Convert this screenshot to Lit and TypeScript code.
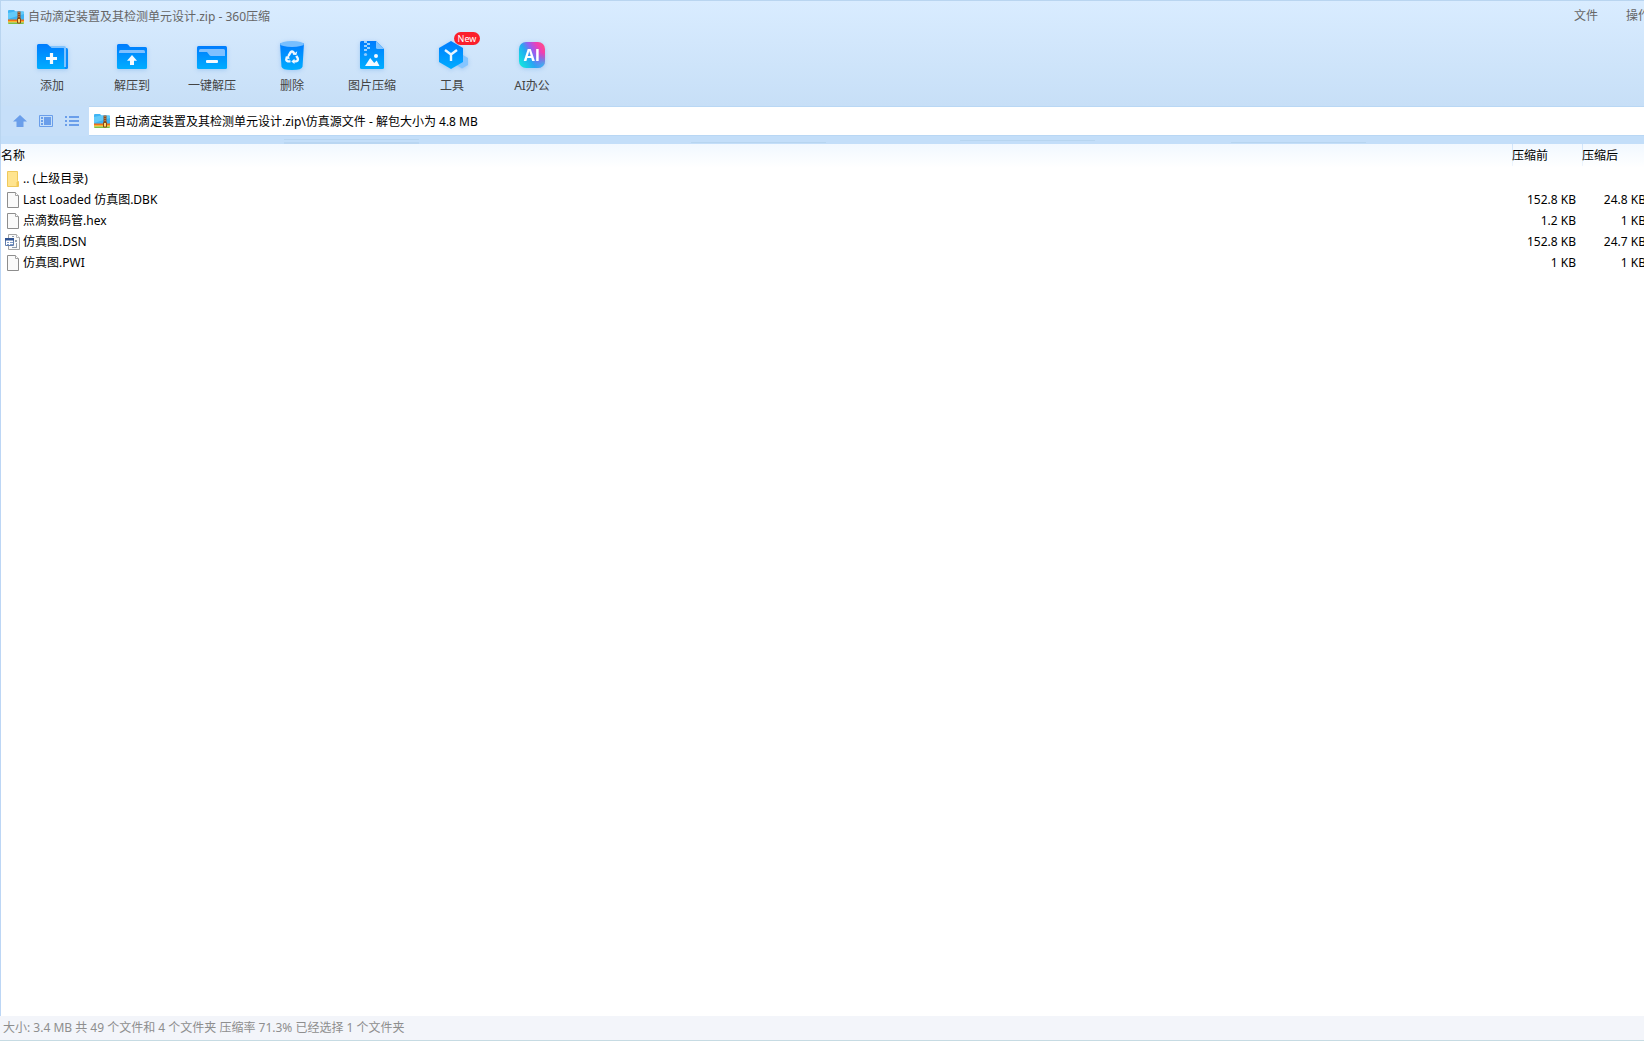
import { LitElement, html, svg, css, TemplateResult } from "lit";
import { customElement } from "lit/decorators.js";

interface Tool {
  label: string;
  icon: TemplateResult;
  isNew?: boolean;
}

interface Entry {
  name: string;
  kind: "folder" | "file" | "dsn";
  before: string;
  after: string;
}

const blue = (id: string) => svg`
  <linearGradient id=${id} x1="0" y1="0" x2="0" y2="1">
    <stop offset="0" stop-color="#007cfe" />
    <stop offset="1" stop-color="#00adff" />
  </linearGradient>`;

const toolSvg = (body: TemplateResult) => html`
  <svg class="tool-icon" width="36" height="36" viewBox="0 0 36 36" aria-hidden="true">${body}</svg>`;

const addIcon = toolSvg(svg`
  <defs>${blue("gAdd")}</defs>
  <path d="M30 12h2.500q1.500 0 1.500 1.500V31.500q0 1.500-1.500 1.500H29z" fill="#0b8bfb" />
  <path d="M3 9.500Q3 8 4.500 8h8q1 0 1.700.8L16 10.500h13q2 0 2 2V33H4.500Q3 33 3 31.500z" fill="url(#gAdd)" />
  <path d="M16 10h14q2 0 2 2v19h-2V12.500q0-.5-.5-.5H17.500z" fill="#7fc3ff" />
  <path d="M15.900 17h3.200v3.900H23v3.200h-3.900V28h-3.200v-3.900H12v-3.200h3.900z" fill="#f5faff" />`);

const extractIcon = toolSvg(svg`
  <defs>${blue("gExt")}</defs>
  <path d="M3 9.500Q3 8 4.500 8h8q1 0 1.700.8L16 11h15.500q1.500 0 1.500 1.500v19q0 1.500-1.500 1.500h-27Q3 33 3 31.500z" fill="url(#gExt)" />
  <path d="M5 17v-1.500Q5 14 6.500 14h23q1.500 0 1.500 1.500V17z" fill="#7fc0ff" />
  <path d="M18 19l5 5.800h-3V29h-4v-4.200h-3z" fill="#f5faff" />`);

const oneKeyIcon = toolSvg(svg`
  <defs>${blue("gKey")}</defs>
  <rect x="3" y="10" width="30" height="23" rx="1.500" fill="url(#gKey)" />
  <path d="M5 16v-1.500Q5 13 6.500 13h23q1.500 0 1.500 1.500V20H17q-1 0-1.500-.7L13 16H5z" fill="#7fc0ff" />
  <rect x="12" y="24" width="12" height="3" rx="1" fill="#f5faff" />`);

const deleteIcon = toolSvg(svg`
  <defs>${blue("gDel")}</defs>
  <path d="M6 7.500h24l-1.500 23Q28 34 18 34T7.500 30.500z" fill="url(#gDel)" />
  <ellipse cx="18" cy="8" rx="12" ry="3" fill="#78bfff" />
  <g fill="none" stroke="#f0f8ff" stroke-width="2.400">
    <path d="M14.400 20l2.200-3.700q1.400-1.500 2.800 0l1 1.700" />
    <path d="M22.300 19.800l1.400 2.400q.8 2.700-1.800 3.200h-2.500" />
    <path d="M16.500 25.400h-2.600q-2.400-.8-1.300-3l.8-1.400" />
  </g>
  <path d="M18.600 18.700l3.800.4.800-3.800zM20.500 22.700v5.400l-3.200-2.700zM10.900 21l3.900-1.300.9 3.800z" fill="#f0f8ff" />`);

const pictureIcon = toolSvg(svg`
  <defs>${blue("gPic")}</defs>
  <path d="M6 6.500Q6 5 7.500 5H22l8 8v18.500q0 1.500-1.500 1.500h-21Q6 33 6 31.500z" fill="url(#gPic)" />
  <path d="M22 5l8 8h-6.500q-1.500 0-1.500-1.500z" fill="#82c4ff" />
  <path d="M10 5h3v2h-3zM13 7h3v2h-3zM10 9h3v2h-3zM13 11h3v2h-3zM10 13h3v2h-3z" fill="#9bd1ff" />
  <circle cx="11.500" cy="18.500" r="1.600" fill="#8ccaff" />
  <circle cx="22" cy="20" r="2" fill="#f5faff" />
  <path d="M11 30l5.200-8 4 5 2.500-2.500L25.500 30z" fill="#f5faff" />`);

const toolsIcon = toolSvg(svg`
  <defs>${blue("gTool")}</defs>
  <path d="M29 19l5 3v7l-6 3.500-5-3z" fill="#85c5ff" />
  <path d="M17 5l12 7v14l-12 7-12-7V12z" fill="url(#gTool)" />
  <path d="M11 14l6 4.500 6-4.500M17 18.500V25" fill="none" stroke="#e9f5ff" stroke-width="2.400" />`);

const aiIcon = toolSvg(svg`
  <defs>
    <linearGradient id="gAi" x1="0" y1=".8" x2="1" y2=".2">
      <stop offset="0" stop-color="#12e6de" />
      <stop offset=".38" stop-color="#25a8f2" />
      <stop offset=".6" stop-color="#9a5cf0" />
      <stop offset=".82" stop-color="#ef3fb4" />
      <stop offset="1" stop-color="#ff4b86" />
    </linearGradient>
    <radialGradient id="gAi2" cx="1" cy="1" r=".6">
      <stop offset="0" stop-color="#18d9f0" />
      <stop offset="1" stop-color="#3a8cf5" stop-opacity="0" />
    </radialGradient>
  </defs>
  <rect x="5" y="6" width="26" height="26" rx="7" fill="url(#gAi)" />
  <rect x="5" y="6" width="26" height="26" rx="7" fill="url(#gAi2)" />
  <text x="18" y="25" text-anchor="middle" font-family="Open Sans, sans-serif" font-weight="700" font-size="16" fill="#fff">AI</text>`);

const tools: Tool[] = [
  { label: "添加", icon: addIcon },
  { label: "解压到", icon: extractIcon },
  { label: "一键解压", icon: oneKeyIcon },
  { label: "删除", icon: deleteIcon },
  { label: "图片压缩", icon: pictureIcon },
  { label: "工具", icon: toolsIcon, isNew: true },
  { label: "AI办公", icon: aiIcon },
];

const entries: Entry[] = [
  { name: ".. (上级目录)", kind: "folder", before: "", after: "" },
  { name: "Last Loaded 仿真图.DBK", kind: "file", before: "152.8 KB", after: "24.8 KB" },
  { name: "点滴数码管.hex", kind: "file", before: "1.2 KB", after: "1 KB" },
  { name: "仿真图.DSN", kind: "dsn", before: "152.8 KB", after: "24.7 KB" },
  { name: "仿真图.PWI", kind: "file", before: "1 KB", after: "1 KB" },
];

const zipIcon = html`
  <svg class="zip" width="16" height="16" viewBox="0 0 16 16" aria-hidden="true">
    <path d="M0 2Q0 1 1 1h5l1.500 1.500H15q1 0 1 1V11H0z" fill="#3fb4f4" />
    <path d="M0 4l7-1.500h8q1 0 1 1V5L0 10z" fill="#62caf9" />
    <path d="M0 10.500h16V12H0z" fill="#ee6f1e" />
    <path d="M0 12h16v1.500H0z" fill="#fbb62a" />
    <path d="M0 13.500h16V14q0 1-1 1H1q-1 0-1-1z" fill="#7cc142" />
    <path d="M9.500 2.500h3V10h-3z" fill="#8a4a22" />
    <path d="M10.500 3h1v1h-1zM10.500 5h1v1h-1zM10.500 7h1v1h-1z" fill="#d99a55" />
    <path d="M9.500 9.500h3V14h-3z" fill="#fbd873" stroke="#8a4a12" />
  </svg>`;

const fileIcons = {
  folder: html`
    <svg class="file-icon" width="16" height="16" viewBox="0 0 16 16" aria-hidden="true">
      <path d="M3.500.5h10v9l1 1v5h-11z" fill="#ffe48f" stroke="#efc95c" />
      <path d="M14 9.500v6h-1.500v-4z" fill="#f3c956" />
    </svg>`,
  file: html`
    <svg class="file-icon" width="16" height="16" viewBox="0 0 16 16" aria-hidden="true">
      <path d="M3.500.5h8l3 3v12h-11z" fill="#fafafa" stroke="#8d8d8d" />
      <path d="M11.500.5v3h3" fill="#fff" stroke="#a2a2a2" />
    </svg>`,
  dsn: html`
    <svg class="file-icon" width="16" height="16" viewBox="0 0 16 16" aria-hidden="true">
      <path d="M4.500.5h8l3 3v12h-11z" fill="#fafafa" stroke="#a5a5a5" />
      <path d="M12.500.5v3h3" fill="#fff" stroke="#b5b5b5" />
      <path d="M11 6h2v2h-2zM12 9h1v4h-1zM8 13h5v1H8zM8 2h2v1H8z" fill="#8f9bab" />
      <path d="M1.500 4.500h8v7h-8z" fill="#fff" stroke="#5f7cab" />
      <path d="M1 4h9v2.500H1z" fill="#2f5392" />
      <path d="M3 8h2v1H3zM6 8h3v1H6zM3 10h2v1H3zM6 10h3v1H6z" fill="#7f9bc8" />
    </svg>`,
};

@customElement("app-root")
export class AppRoot extends LitElement {
  static styles = css`
    :host {
      display: flex;
      flex-direction: column;
      box-sizing: border-box;
      height: 100vh;
      overflow: hidden;
      border-top: 1px solid #b9d5f0;
      border-bottom: 1px solid #c6dbe3;
      background: #fff;
      color: #000;
      font: 12px/16px "Noto Sans", "Noto Sans CJK SC", sans-serif;
      white-space: nowrap;
    }
    button,
    input {
      margin: 0;
      padding: 0;
      border: 0;
      background: none;
      color: inherit;
      font: inherit;
    }
    .top {
      border-left: 1px solid #b9d5f0;
      background: linear-gradient(#d9ecff, #c7dff7);
    }
    .titlebar {
      display: flex;
      align-items: center;
      justify-content: space-between;
      height: 30px;
      padding-left: 7px;
      color: #666;
    }
    .title {
      display: flex;
      align-items: center;
      gap: 4px;
      margin: 0;
      padding-top: 2px;
      font-size: 12px;
      font-weight: 400;
    }
    .menu {
      display: flex;
      gap: 28px;
      margin-right: -6px;
    }
    .toolbar {
      display: flex;
      height: 75px;
      padding: 5px 0 0 11px;
      box-sizing: border-box;
    }
    .tool {
      position: relative;
      display: flex;
      flex-direction: column;
      align-items: center;
      gap: 6px;
      width: 80px;
      height: 64px;
      color: #444;
    }
    .tool-icon {
      filter: drop-shadow(0 1px 2px rgb(60 140 230 / 30%));
    }
    .badge {
      position: absolute;
      top: -4px;
      left: 42px;
      width: 26px;
      border-radius: 7px;
      background: #fb1f2b;
      color: #fff;
      font-size: 9px;
      line-height: 13px;
    }
    .nav {
      display: flex;
      align-items: center;
      padding-left: 11px;
      border-left: 1px solid #b9d5f0;
      background: #c6dff9;
    }
    .nav-buttons {
      display: flex;
      gap: 10px;
      width: 77px;
    }
    .nav-button,
    .nav-button svg {
      display: block;
    }
    .address {
      display: flex;
      flex: 1;
      align-items: center;
      gap: 4px;
      height: 28px;
      padding-left: 5px;
      border: solid #b9d7f4;
      border-width: 1px 0;
      background: #fff;
    }
    .address-input {
      flex: 1;
      padding-top: 2px;
      outline: 0;
    }
    .strip {
      height: 8px;
      border-left: 1px solid #b9d5f0;
      background:
        linear-gradient(#b7d5f0, #b7d5f0) 283px 3px / 135px 1px no-repeat,
        linear-gradient(#b9d6f2, #b9d6f2) 283px 6px / 135px 2px no-repeat,
        linear-gradient(#b7d5f0, #b7d5f0) 690px 6px / 135px 1px no-repeat,
        linear-gradient(#b7d5f0, #b7d5f0) 959px 4px / 135px 1px no-repeat,
        linear-gradient(#b7d5f0, #b7d5f0) 1230px 6px / 135px 1px no-repeat,
        #c3def9;
    }
    .list {
      flex: 1;
      overflow: hidden;
      border-left: 1px solid #bcd6f5;
      background: #fff;
    }
    .table {
      width: calc(100% + 8px);
      table-layout: fixed;
      border-collapse: collapse;
    }
    .size-col {
      width: 70px;
    }
    .head {
      height: 24px;
      background: linear-gradient(#f1f8ff, #fff);
    }
    .head th {
      padding: 0;
      text-align: left;
      font-weight: 400;
    }
    .head .size {
      background: linear-gradient(#cfe4fa, #eef6fe) left top / 1px 22px no-repeat;
    }
    .row {
      height: 21px;
    }
    .row td {
      padding: 0;
    }
    .row .size {
      padding-right: 6px;
      text-align: right;
    }
    .name {
      display: flex;
      align-items: center;
      gap: 3px;
      padding-left: 3px;
    }
    .status {
      padding: 4px 3px;
      background: #f3f5fa;
      color: #8e8e8e;
    }
  `;

  render() {
    return html`
      <header class="top">
        <div class="titlebar">
          <h1 class="title">${zipIcon}<span>自动滴定装置及其检测单元设计.zip - 360压缩</span></h1>
          <nav class="menu">
            <button>文件</button>
            <button>操作</button>
          </nav>
        </div>
        <div class="toolbar">
          ${tools.map(
            (t) => html`<button class="tool">
              ${t.icon}<span>${t.label}</span>
              ${t.isNew ? html`<span class="badge">New</span>` : null}
            </button>`
          )}
        </div>
      </header>
      <div class="nav">
        <div class="nav-buttons">
          <button class="nav-button" aria-label="Up">
            <svg width="16" height="16" viewBox="0 0 16 16">
              <path d="M8 2l7 6.500h-3.500V14h-7V8.500H1z" fill="#6a9eea" />
            </svg>
          </button>
          <button class="nav-button" aria-label="Preview">
            <svg width="16" height="16" viewBox="0 0 16 16">
              <path d="M1.500 2.500h13v11h-13z" fill="none" stroke="#6a9eea" />
              <path d="M3 4h2v2H3zM3 7h2v2H3zM3 10h2v2H3zM6 4h7v8H6z" fill="#6a9eea" />
            </svg>
          </button>
          <button class="nav-button" aria-label="List">
            <svg width="16" height="16" viewBox="0 0 16 16">
              <path d="M1 3h2v2H1zM5 3h10v2H5zM1 7h2v2H1zM5 7h10v2H5zM1 11h2v2H1zM5 11h10v2H5z" fill="#6a9eea" />
            </svg>
          </button>
        </div>
        <label class="address">
          ${zipIcon}
          <input
            class="address-input"
            type="text"
            aria-label="Path"
            .value=${"自动滴定装置及其检测单元设计.zip\\仿真源文件 - 解包大小为 4.8 MB"}
          />
        </label>
      </div>
      <div class="strip"></div>
      <main class="list">
        <table class="table">
          <colgroup>
            <col />
            <col class="size-col" />
            <col class="size-col" />
          </colgroup>
          <thead>
            <tr class="head">
              <th>名称</th>
              <th class="size">压缩前</th>
              <th class="size">压缩后</th>
            </tr>
          </thead>
          <tbody>
            ${entries.map(
              (e) => html`<tr class="row">
                <td><div class="name">${fileIcons[e.kind]}<span>${e.name}</span></div></td>
                <td class="size">${e.before}</td>
                <td class="size">${e.after}</td>
              </tr>`
            )}
          </tbody>
        </table>
      </main>
      <footer class="status">大小: 3.4 MB 共 49 个文件和 4 个文件夹 压缩率 71.3% 已经选择 1 个文件夹</footer>
    `;
  }
}
